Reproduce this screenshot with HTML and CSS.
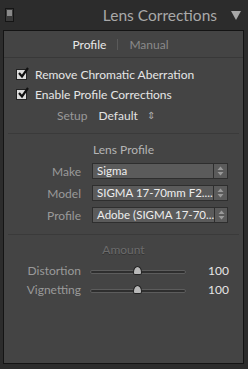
FILE: index.html
```html
<!DOCTYPE html>
<html lang="en">
<head>
  <meta charset="UTF-8" />
  <title>Lens Corrections</title>
  <link rel="stylesheet" href="styles.css">
</head>
<body>

<div class="header">
  <span class="switch"><span class="knob"></span></span>
  <h1>Lens Corrections</h1>
  <svg class="collapse" width="10" height="9" viewBox="0 0 10 9"><polygon points="0,0 10,0 5,9" fill="#a8a8a8"/></svg>
</div>

<div class="panel">
  <div class="tabs">
    <span class="tab active">Profile</span>
    <span class="tabsep"></span>
    <span class="tab">Manual</span>
  </div>

  <div class="section first">
    <label class="check"><span class="box"><svg width="12" height="12" viewBox="0 0 12 12"><path d="M2 6 L5 9.5 L11 1" fill="none" stroke="#111" stroke-width="2.2"/></svg></span>Remove Chromatic Aberration</label>
    <label class="check"><span class="box"><svg width="12" height="12" viewBox="0 0 12 12"><path d="M2 6 L5 9.5 L11 1" fill="none" stroke="#111" stroke-width="2.2"/></svg></span>Enable Profile Corrections</label>
    <div class="setup">
      <span class="lbl">Setup</span>
      <span class="val">Default</span>
      <span class="updown">&#8661;</span>
    </div>
  </div>

  <div class="section">
    <div class="title">Lens Profile</div>
    <div class="row">
      <span class="lbl">Make</span>
      <div class="select"><span class="txt">Sigma</span><span class="arrows"><svg width="7" height="10" viewBox="0 0 7 10"><polygon points="3.5,0.5 6.5,4 0.5,4" fill="#999"/><polygon points="3.5,9.5 6.5,6 0.5,6" fill="#999"/></svg></span></div>
    </div>
    <div class="row">
      <span class="lbl">Model</span>
      <div class="select"><span class="txt">SIGMA 17-70mm F2....</span><span class="arrows"><svg width="7" height="10" viewBox="0 0 7 10"><polygon points="3.5,0.5 6.5,4 0.5,4" fill="#999"/><polygon points="3.5,9.5 6.5,6 0.5,6" fill="#999"/></svg></span></div>
    </div>
    <div class="row">
      <span class="lbl">Profile</span>
      <div class="select"><span class="txt">Adobe (SIGMA 17-70...</span><span class="arrows"><svg width="7" height="10" viewBox="0 0 7 10"><polygon points="3.5,0.5 6.5,4 0.5,4" fill="#999"/><polygon points="3.5,9.5 6.5,6 0.5,6" fill="#999"/></svg></span></div>
    </div>
  </div>

  <div class="section last">
    <div class="title dim">Amount</div>
    <div class="row slide">
      <span class="lbl">Distortion</span>
      <div class="slider"><span class="track"></span><span class="thumb"></span></div>
      <span class="num">100</span>
    </div>
    <div class="row slide">
      <span class="lbl">Vignetting</span>
      <div class="slider"><span class="track"></span><span class="thumb"></span></div>
      <span class="num">100</span>
    </div>
  </div>
</div>

</body>
</html>
```

FILE: styles.css
```css
* {
  box-sizing: border-box;
}

body {
  margin: 0;
  width: 248px;
  height: 369px;
  background: #2c2c2c;
  font-family: Lato, "Open Sans", sans-serif;
  font-size: 12px;
  color: #c8c8c8;
  overflow: hidden;
}

.header {
  height: 30px;
  display: flex;
  align-items: center;
  padding: 0 7px 0 5px;
}

.switch {
  width: 9px;
  height: 14px;
  border: 1px solid #151515;
  background: #3a3a3a;
  display: flex;
  flex-direction: column;
  padding: 1px;
}

.switch .knob {
  height: 6px;
  background: #8a8a8a;
}

.header h1 {
  flex: 1;
  margin: 0 14px 0 0;
  text-align: right;
  font-weight: normal;
  font-size: 15.5px;
  color: #a9a9a9;
}

.collapse {
  margin-top: 1px;
}

.panel {
  margin: 0 4px 0 3px;
  height: 334px;
  background: #444;
  border: 1px solid #141414;
}

.tabs {
  height: 27px;
  display: flex;
  align-items: center;
  justify-content: center;
  gap: 11px;
  border-bottom: 1px solid #383838;
  padding-right: 6px;
}

.tab {
  color: #8a8a8a;
}

.tab.active {
  color: #e8e8e8;
}

.tabsep {
  width: 1px;
  height: 11px;
  background: #5a5a5a;
}

.section {
  margin: 0 4px;
  border-bottom: 1px solid #3a3a3a;
  padding: 7px 0 8px;
}

.section.first {
  padding: 6px 0 7px;
}

.section.last {
  border-bottom: none;
  padding-top: 6px;
}

.check {
  display: flex;
  align-items: center;
  height: 20px;
  padding-left: 8px;
  color: #e6e6e6;
}

.box {
  width: 11px;
  height: 11px;
  background: #dcdcdc;
  border: 1px solid #222;
  margin-right: 8px;
  position: relative;
}

.box svg {
  position: absolute;
  left: 0;
  top: -3px;
}

.setup {
  display: flex;
  align-items: center;
  height: 22px;
  padding-left: 49px;
}

.lbl {
  color: #9a9a9a;
}

.setup .val {
  margin-left: 11px;
  color: #e2e2e2;
}

.updown {
  margin-left: 9px;
  font-size: 10px;
  color: #aaa;
}

.title {
  text-align: center;
  color: #b4b4b4;
  height: 17px;
  margin-bottom: 2px;
  line-height: 17px;
}

.title.dim {
  color: #6c6c6c;
  text-shadow: 0 1px 0 #333;
  margin-bottom: 3px;
}

.row {
  display: flex;
  align-items: center;
  height: 22px;
}

.row .lbl {
  width: 73px;
  text-align: right;
}

.select {
  margin-left: 11px;
  width: 136px;
  height: 16px;
  display: flex;
  background: #5b5b5b;
  border: 1px solid #2e2e2e;
  color: #eee;
}

.select .txt {
  flex: 1;
  padding-left: 4px;
  line-height: 14px;
  font-size: 11.5px;
  white-space: nowrap;
}

.select .arrows {
  width: 14px;
  border-left: 1px solid #2e2e2e;
  display: flex;
  align-items: center;
  justify-content: center;
}

.slide {
  height: 19px;
}

.slider {
  margin-left: 9px;
  width: 96px;
  height: 12px;
  position: relative;
}

.track {
  position: absolute;
  left: 0;
  right: 0;
  top: 5px;
  height: 4px;
  border-radius: 2px;
  background: #2e2e2e;
  border: 1px solid #5c5c5c;
}

.thumb {
  position: absolute;
  left: 43px;
  top: 1px;
  width: 9px;
  height: 9px;
  background: #b8b8b8;
  border: 1px solid #222;
  border-radius: 50% 50% 2px 2px / 70% 70% 2px 2px;
}

.num {
  flex: 1;
  text-align: right;
  padding-right: 10px;
  color: #e6e6e6;
}
```
